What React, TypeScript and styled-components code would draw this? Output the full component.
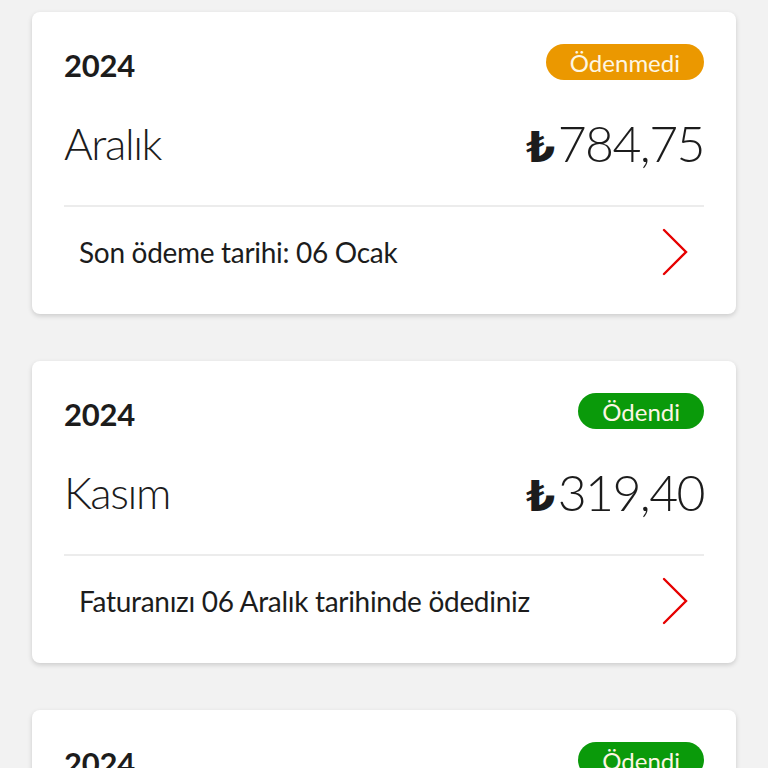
import React from 'react';
import styled, { createGlobalStyle } from 'styled-components';

type Bill = {
  year: string;
  month: string;
  amount: string;
  paid: boolean;
  note: string;
};

const BILLS: Bill[] = [
  { year: '2024', month: 'Aralık', amount: '784,75', paid: false, note: 'Son ödeme tarihi: 06 Ocak' },
  { year: '2024', month: 'Kasım', amount: '319,40', paid: true, note: 'Faturanızı 06 Aralık tarihinde ödediniz' },
  { year: '2024', month: 'Ekim', amount: '301,20', paid: true, note: 'Faturanızı 06 Kasım tarihinde ödediniz' },
];

const GlobalStyle = createGlobalStyle`
  html, body {
    margin: 0;
    padding: 0;
    background: #f2f2f2;
    font-family: Lato, "Open Sans", "Noto Sans", sans-serif;
    color: #1c1c1c;
  }
`;

const Page = styled.div`
  display: flex;
  flex-direction: column;
  gap: 47px;
  padding: 12px 32px 40px;
  box-sizing: border-box;
  width: 100%;
`;

const Card = styled.div`
  background: #ffffff;
  border-radius: 8px;
  box-shadow: 0 2px 5px rgba(0, 0, 0, 0.16);
  padding: 32px 32px 0;
  display: flex;
  flex-direction: column;
`;

const HeaderRow = styled.div`
  display: flex;
  justify-content: space-between;
  align-items: center;
  height: 36px;
`;

const Year = styled.div`
  font-size: 31px;
  font-weight: 700;
  letter-spacing: -0.2px;
  padding-top: 6px;
`;

const Badge = styled.div<{ $paid: boolean }>`
  height: 36px;
  padding: 0 24px;
  border-radius: 18px;
  display: flex;
  align-items: center;
  background: ${({ $paid }) => ($paid ? '#0a9a0a' : '#eb9800')};
  color: #fdf6e3;
  font-size: 24px;
  font-weight: 400;
`;

const MainRow = styled.div`
  display: flex;
  justify-content: space-between;
  align-items: center;
  height: 125px;
`;

const Month = styled.div`
  font-size: 44px;
  font-weight: 300;
  letter-spacing: -1.4px;
`;

const Amount = styled.div`
  display: flex;
  align-items: baseline;
  font-size: 50px;
  font-weight: 300;
  letter-spacing: -1.6px;
`;

const Lira = styled.span`
  font-weight: 700;
  font-family: "DejaVu Sans", sans-serif;
  font-size: 42px;
  margin-right: 4px;
`;

const Divider = styled.div`
  height: 2px;
  background: #ececec;
`;

const FooterRow = styled.div`
  display: flex;
  justify-content: space-between;
  align-items: center;
  height: 107px;
  padding: 0 16px 18px 15px;
  box-sizing: border-box;
`;

const Note = styled.div`
  font-size: 28px;
  font-weight: 400;
  letter-spacing: -0.3px;
`;

const Chevron = () => (
  <svg width="26" height="48" viewBox="0 0 26 48" fill="none">
    <path d="M2 2 L24 24 L2 46" stroke="#e60000" strokeWidth="2.4" strokeLinecap="round" strokeLinejoin="miter" />
  </svg>
);

const BillCard = ({ bill }: { bill: Bill }) => (
  <Card>
    <HeaderRow>
      <Year>{bill.year}</Year>
      <Badge $paid={bill.paid}>{bill.paid ? 'Ödendi' : 'Ödenmedi'}</Badge>
    </HeaderRow>
    <MainRow>
      <Month>{bill.month}</Month>
      <Amount>
        <Lira>₺</Lira>
        {bill.amount}
      </Amount>
    </MainRow>
    <Divider />
    <FooterRow>
      <Note>{bill.note}</Note>
      <Chevron />
    </FooterRow>
  </Card>
);

const App = () => {
  return (
    <>
      <GlobalStyle />
      <Page>
        {BILLS.map((b, i) => (
          <BillCard key={i} bill={b} />
        ))}
      </Page>
    </>
  );
};

export default App;
